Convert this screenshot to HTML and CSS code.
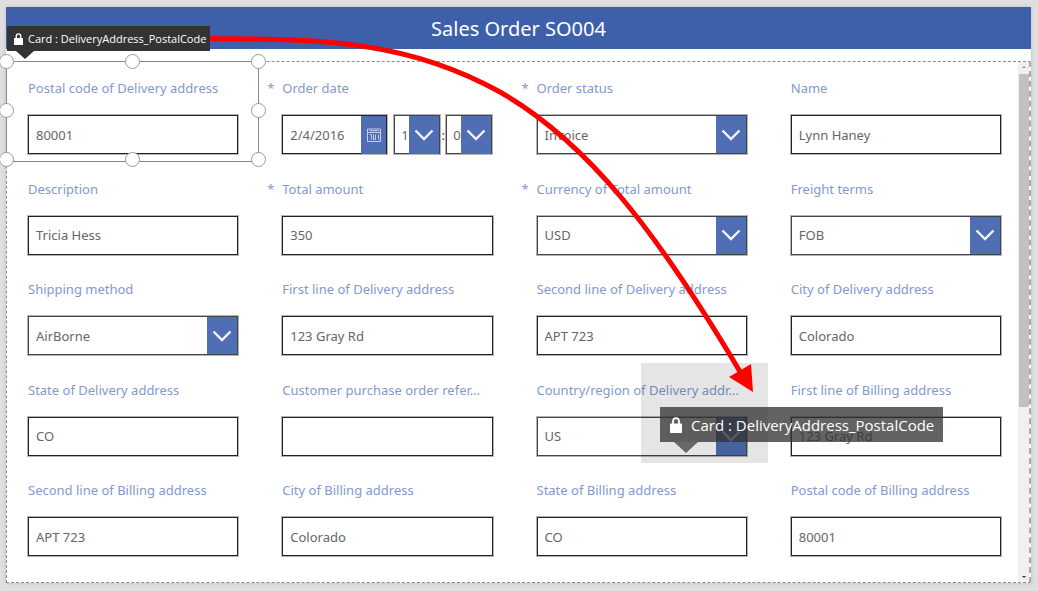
FILE: index.html
```html
<!DOCTYPE html>
<html lang="en">
<head>
<meta charset="utf-8">
<title>Sales Order SO004</title>
<link rel="stylesheet" href="styles.css">
</head>
<body>
<svg class="defs" aria-hidden="true">
  <symbol id="chevron" viewBox="0 0 20 14"><path d="M1.5 2.5 L10 11 L18.5 2.5" fill="none" stroke="#f4f6fb" stroke-width="2.4"/></symbol>
  <symbol id="lock" viewBox="0 0 12 16"><path d="M3 8V4.600C3 2.600 4.300 1.200 6 1.200S9 2.600 9 4.600V8" fill="none" stroke="#fff" stroke-width="1.800"/><rect x="0" y="6.500" width="12" height="9.500" rx=".8" fill="#fff"/></symbol>
</svg>
<main class="screen">
  <header class="title-bar"><h1 class="title">Sales Order SO004</h1></header>
  <section class="gallery">
    <form class="form">
      <div class="card selected">
        <label class="label" for="f1">Postal code of Delivery address</label>
        <input class="box" id="f1" value="80001">
        <i class="handle tl"></i><i class="handle tc"></i><i class="handle tr"></i>
        <i class="handle ml"></i><i class="handle mr"></i>
        <i class="handle bl"></i><i class="handle bc"></i><i class="handle br"></i>
        <div class="tag tag-small"><svg class="lock" aria-hidden="true"><use href="#lock"/></svg><span>Card : DeliveryAddress_PostalCode</span></div>
      </div>
      <div class="card">
        <label class="label" for="f2"><span class="star">*</span>Order date</label>
        <div class="date-row">
          <div class="date"><input class="box" id="f2" value="2/4/2016"><button class="calendar" type="button" aria-label="Pick a date"><svg class="calendar-icon" viewBox="0 0 14 14" aria-hidden="true"><path d="M.5 1h13v12.500H.5zM.5 4.500h13M2.500 2.700h9M2.500 6.500h2V11.500M6.500 6.500V11.500h2V6.500M11.500 6.500V11.500" fill="none" stroke="#c5cfe8" stroke-width="1"/></svg></button></div>
          <div class="pick time"><select class="box" aria-label="Hour"><option>1</option></select><span class="drop"><svg class="chevron"><use href="#chevron"/></svg></span></div>
          <span class="colon">:</span>
          <div class="pick time"><select class="box" aria-label="Minute"><option>0</option></select><span class="drop"><svg class="chevron"><use href="#chevron"/></svg></span></div>
        </div>
      </div>
      <div class="card">
        <label class="label" for="f3"><span class="star">*</span>Order status</label>
        <div class="pick"><select class="box" id="f3"><option>Invoice</option></select><span class="drop"><svg class="chevron"><use href="#chevron"/></svg></span></div>
      </div>
      <div class="card">
        <label class="label" for="f4">Name</label>
        <input class="box" id="f4" value="Lynn Haney">
      </div>
      <div class="card">
        <label class="label" for="f5">Description</label>
        <input class="box" id="f5" value="Tricia Hess">
      </div>
      <div class="card">
        <label class="label" for="f6"><span class="star">*</span>Total amount</label>
        <input class="box" id="f6" value="350">
      </div>
      <div class="card">
        <label class="label" for="f7"><span class="star">*</span>Currency of Total amount</label>
        <div class="pick"><select class="box" id="f7"><option>USD</option></select><span class="drop"><svg class="chevron"><use href="#chevron"/></svg></span></div>
      </div>
      <div class="card">
        <label class="label" for="f8">Freight terms</label>
        <div class="pick"><select class="box" id="f8"><option>FOB</option></select><span class="drop"><svg class="chevron"><use href="#chevron"/></svg></span></div>
      </div>
      <div class="card">
        <label class="label" for="f9">Shipping method</label>
        <div class="pick"><select class="box" id="f9"><option>AirBorne</option></select><span class="drop"><svg class="chevron"><use href="#chevron"/></svg></span></div>
      </div>
      <div class="card">
        <label class="label" for="f10">First line of Delivery address</label>
        <input class="box" id="f10" value="123 Gray Rd">
      </div>
      <div class="card">
        <label class="label" for="f11">Second line of Delivery address</label>
        <input class="box" id="f11" value="APT 723">
      </div>
      <div class="card">
        <label class="label" for="f12">City of Delivery address</label>
        <input class="box" id="f12" value="Colorado">
      </div>
      <div class="card">
        <label class="label" for="f13">State of Delivery address</label>
        <input class="box" id="f13" value="CO">
      </div>
      <div class="card">
        <label class="label" for="f14">Customer purchase order refer…</label>
        <input class="box" id="f14" value="">
      </div>
      <div class="card">
        <label class="label" for="f15">Country/region of Delivery addr…</label>
        <div class="pick"><select class="box" id="f15"><option>US</option></select><span class="drop"><svg class="chevron"><use href="#chevron"/></svg></span></div>
      </div>
      <div class="card">
        <label class="label" for="f16">First line of Billing address</label>
        <input class="box" id="f16" value="123 Gray Rd">
      </div>
      <div class="card">
        <label class="label" for="f17">Second line of Billing address</label>
        <input class="box" id="f17" value="APT 723">
      </div>
      <div class="card">
        <label class="label" for="f18">City of Billing address</label>
        <input class="box" id="f18" value="Colorado">
      </div>
      <div class="card">
        <label class="label" for="f19">State of Billing address</label>
        <input class="box" id="f19" value="CO">
      </div>
      <div class="card">
        <label class="label" for="f20">Postal code of Billing address</label>
        <input class="box" id="f20" value="80001">
      </div>
    </form>
    <div class="scrollbar"><span class="scroll-up"></span><span class="thumb"></span><span class="scroll-down"></span></div>
  </section>
</main>
<div class="ghost"><div class="tag tag-large"><svg class="lock" aria-hidden="true"><use href="#lock"/></svg><span>Card : DeliveryAddress_PostalCode</span></div></div>
<svg class="drag-arrow" viewBox="0 0 800 420" aria-hidden="true">
  <path d="M210 38.500 C330 39 410 42 500 92 C586 141 655 228 742 375" fill="none" stroke="#f00" stroke-width="5"/>
  <path d="M753 392 L729 377 L751 364 Z" fill="#f00"/>
</svg>
</body>
</html>
```
FILE: styles.css
```css
* { box-sizing: border-box; }
body {
  margin: 0;
  min-height: 100vh;
  padding: 7px 7px 8px 6px;
  display: flex;
  position: relative;
  background: #dfdfdf;
  font-family: "Noto Sans", "Open Sans", sans-serif;
  font-size: 13px;
  color: #444;
}
.defs { position: absolute; width: 0; height: 0; }
.screen {
  flex: 1;
  min-width: 0;
  display: flex;
  flex-direction: column;
  gap: 12px;
  background: #fff;
  box-shadow: 0 0 4px rgba(0, 0, 0, .15);
}
.title-bar {
  height: 42px;
  padding-top: 2px;
  display: flex;
  align-items: center;
  justify-content: center;
  background: #3e5fa9;
}
.title { margin: 0; font-size: 20px; line-height: 28px; font-weight: 400; color: #fff; }
.gallery {
  flex: 1;
  display: flex;
  border: 1px dashed #8a8a8a;
  border-right: 2px dashed #aaa;
}
.form {
  flex: 1;
  min-width: 0;
  margin: 0 -5px 17px -1px;
  display: grid;
  grid-template-columns: repeat(4, minmax(0, 1fr));
  grid-template-rows: repeat(5, 1fr);
}
.card {
  position: relative;
  padding: 16px 22px 0;
  display: flex;
  flex-direction: column;
  gap: 17px;
}
.label {
  height: 20px;
  line-height: 20px;
  white-space: nowrap;
  color: #8299cf;
}
.star { display: inline-block; width: 15px; margin-left: -15px; }
.box {
  width: 100%;
  height: 39px;
  margin: 0;
  padding: 0 7px;
  border: 1px solid #222;
  border-radius: 0;
  box-shadow: 0 0 0 1px #b4b4b4;
  background: #fff;
  color: #666;
  font: 400 13px "Noto Sans", "Open Sans", sans-serif;
  appearance: none;
}
.pick { position: relative; display: flex; }
.pick .box { border-color: #444; }
.drop {
  position: absolute;
  top: 1px;
  right: 1px;
  bottom: 1px;
  width: 30px;
  display: grid;
  place-items: center;
  background: #506eb4;
  pointer-events: none;
}
.chevron { width: 20px; height: 14px; }
.date-row { display: flex; }
.date { position: relative; width: 105px; margin-right: 7px; }
.calendar {
  position: absolute;
  top: 1px;
  right: 1px;
  bottom: 1px;
  width: 25px;
  padding: 0;
  border: 0;
  display: grid;
  place-items: center;
  background: #506eb4;
}
.calendar-icon { width: 14px; height: 14px; }
.time { width: 46px; }
.time .box { padding: 0 6px; }
.colon { width: 6px; line-height: 40px; text-align: center; }
.selected::before {
  content: "";
  position: absolute;
  top: -1px;
  left: 0;
  right: 1px;
  height: 99px;
  border: 1px solid #888;
  pointer-events: none;
}
.handle {
  position: absolute;
  width: 15px;
  height: 15px;
  border: 1px solid #999;
  border-radius: 50%;
  background: #fff;
}
.tl, .tc, .tr { top: -8px; }
.ml, .mr { top: 41px; }
.bl, .bc, .br { top: 90px; }
.tl, .ml, .bl { left: -7px; }
.tc, .bc { left: calc(50% - 8px); }
.tr, .mr, .br { right: -6px; }
.tag {
  position: absolute;
  display: flex;
  align-items: center;
  white-space: nowrap;
  color: #fff;
  font-family: "Open Sans", "Noto Sans", sans-serif;
}
.tag::after {
  content: "";
  position: absolute;
  top: 100%;
  border: solid transparent;
  border-bottom: 0;
}
.tag-small {
  left: 1px;
  top: -36px;
  width: 203px;
  height: 25px;
  padding-left: 7px;
  gap: 5px;
  background: #333;
  font-size: 11px;
}
.tag-small .lock { width: 9px; height: 12px; }
.tag-small::after { left: 9px; border-width: 8px 9px 0; border-top-color: #333; }
.ghost {
  position: absolute;
  left: 641px;
  top: 363px;
  width: 127px;
  height: 100px;
  background: rgba(0, 0, 0, .1);
}
.tag-large {
  left: 19px;
  top: 44px;
  width: 283px;
  height: 35px;
  padding-left: 10px;
  gap: 9px;
  background: rgba(50, 50, 50, .76);
  font-size: 15px;
}
.tag-large .lock { width: 12px; height: 16px; }
.tag-large::after { left: 14px; border-width: 11px 12px 0; border-top-color: rgba(50, 50, 50, .7); }
.drag-arrow {
  position: absolute;
  left: 0;
  top: 0;
  width: 800px;
  height: 420px;
  pointer-events: none;
}
.scrollbar {
  position: relative;
  width: 11px;
  display: flex;
  flex-direction: column;
  justify-content: space-between;
  align-items: center;
  padding: 4px 0;
  background: #f0f0f0;
}
.scroll-up { border: 2px solid transparent; border-top: 0; border-bottom-color: #999; }
.scroll-down { border: 2px solid transparent; border-bottom: 0; border-top-color: #333; }
.thumb { width: 10px; height: 65%; margin: 6px 0 auto; background: #c1c1c1; }
```
